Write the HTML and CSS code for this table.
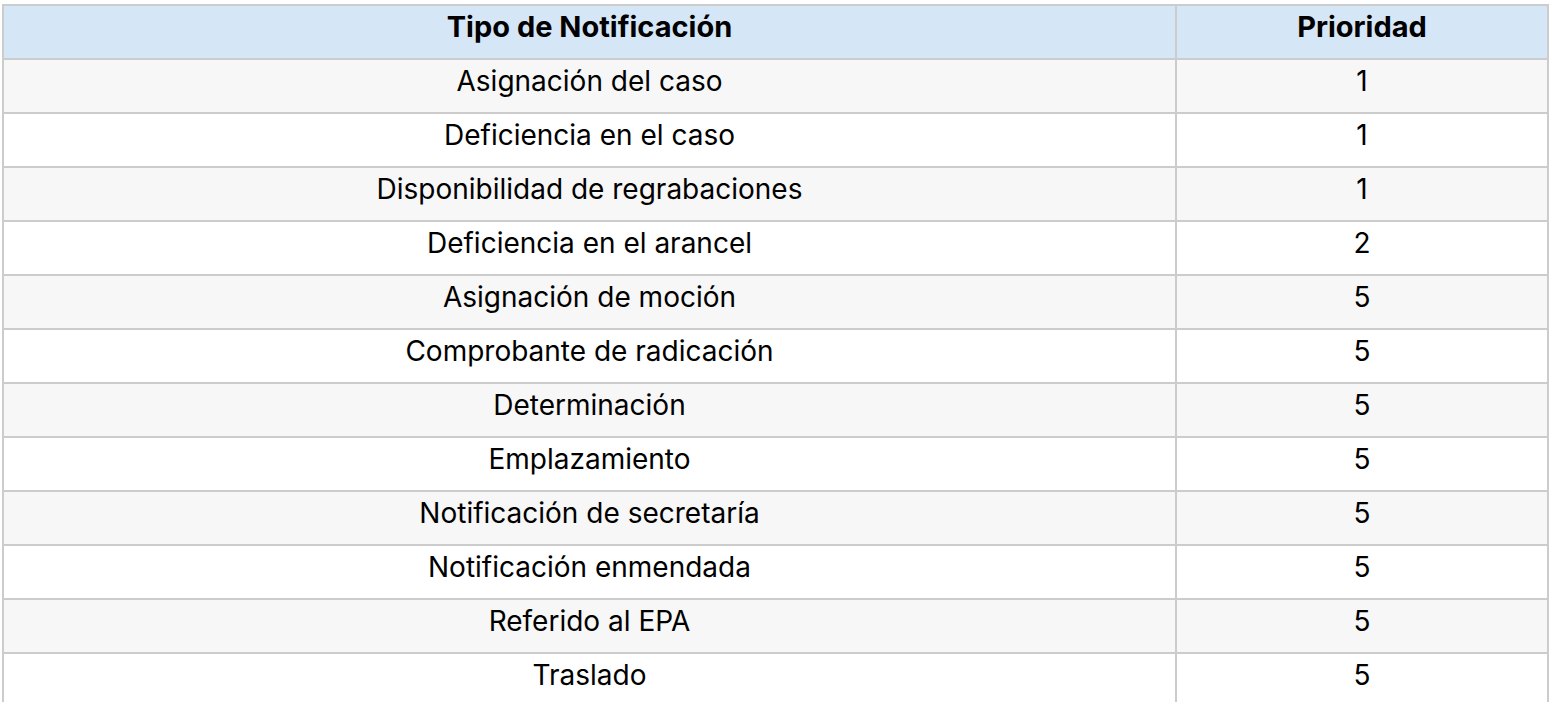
FILE: index.html
```html
<!DOCTYPE html>
<html lang="es">
<head>
<meta charset="utf-8">
<title>Prioridad de notificaciones</title>
<link rel="stylesheet" href="styles.css">
</head>
<body>
<table class="prio-table">
  <thead>
    <tr><th class="col-type">Tipo de Notificación</th><th class="col-prio">Prioridad</th></tr>
  </thead>
  <tbody>
    <tr><td>Asignación del caso</td><td>1</td></tr>
    <tr><td>Deficiencia en el caso</td><td>1</td></tr>
    <tr><td>Disponibilidad de regrabaciones</td><td>1</td></tr>
    <tr><td>Deficiencia en el arancel</td><td>2</td></tr>
    <tr><td>Asignación de moción</td><td>5</td></tr>
    <tr><td>Comprobante de radicación</td><td>5</td></tr>
    <tr><td>Determinación</td><td>5</td></tr>
    <tr><td>Emplazamiento</td><td>5</td></tr>
    <tr><td>Notificación de secretaría</td><td>5</td></tr>
    <tr><td>Notificación enmendada</td><td>5</td></tr>
    <tr><td>Referido al EPA</td><td>5</td></tr>
    <tr><td>Traslado</td><td>5</td></tr>
  </tbody>
</table>
</body>
</html>
```

FILE: styles.css
```css
html, body {
  margin: 0;
  padding: 0;
  background: #ffffff;
}
body {
  font-family: Inter, "Liberation Sans", sans-serif;
  color: #000;
  padding: 4px 0 0 2px;
}
.prio-table {
  border-collapse: separate;
  border-spacing: 0;
  border-top: 2px solid #cccccc;
  border-left: 2px solid #cccccc;
  table-layout: fixed;
  width: 1547px;
}
.prio-table th,
.prio-table td {
  border-right: 2px solid #cccccc;
  border-bottom: 2px solid #cccccc;
  height: 42px;
  padding: 0 0 10px 0;
  text-align: center;
  vertical-align: middle;
  font-size: 28px;
  line-height: 32px;
}
.prio-table th {
  background: #d5e6f7;
  font-weight: 700;
  font-size: 29px;
}
.prio-table td {
  font-weight: 400;
}
.col-type { width: 1171px; }
.col-prio { width: 370px; }
.prio-table tbody tr:nth-child(odd) td {
  background: #f7f7f7;
}
```
